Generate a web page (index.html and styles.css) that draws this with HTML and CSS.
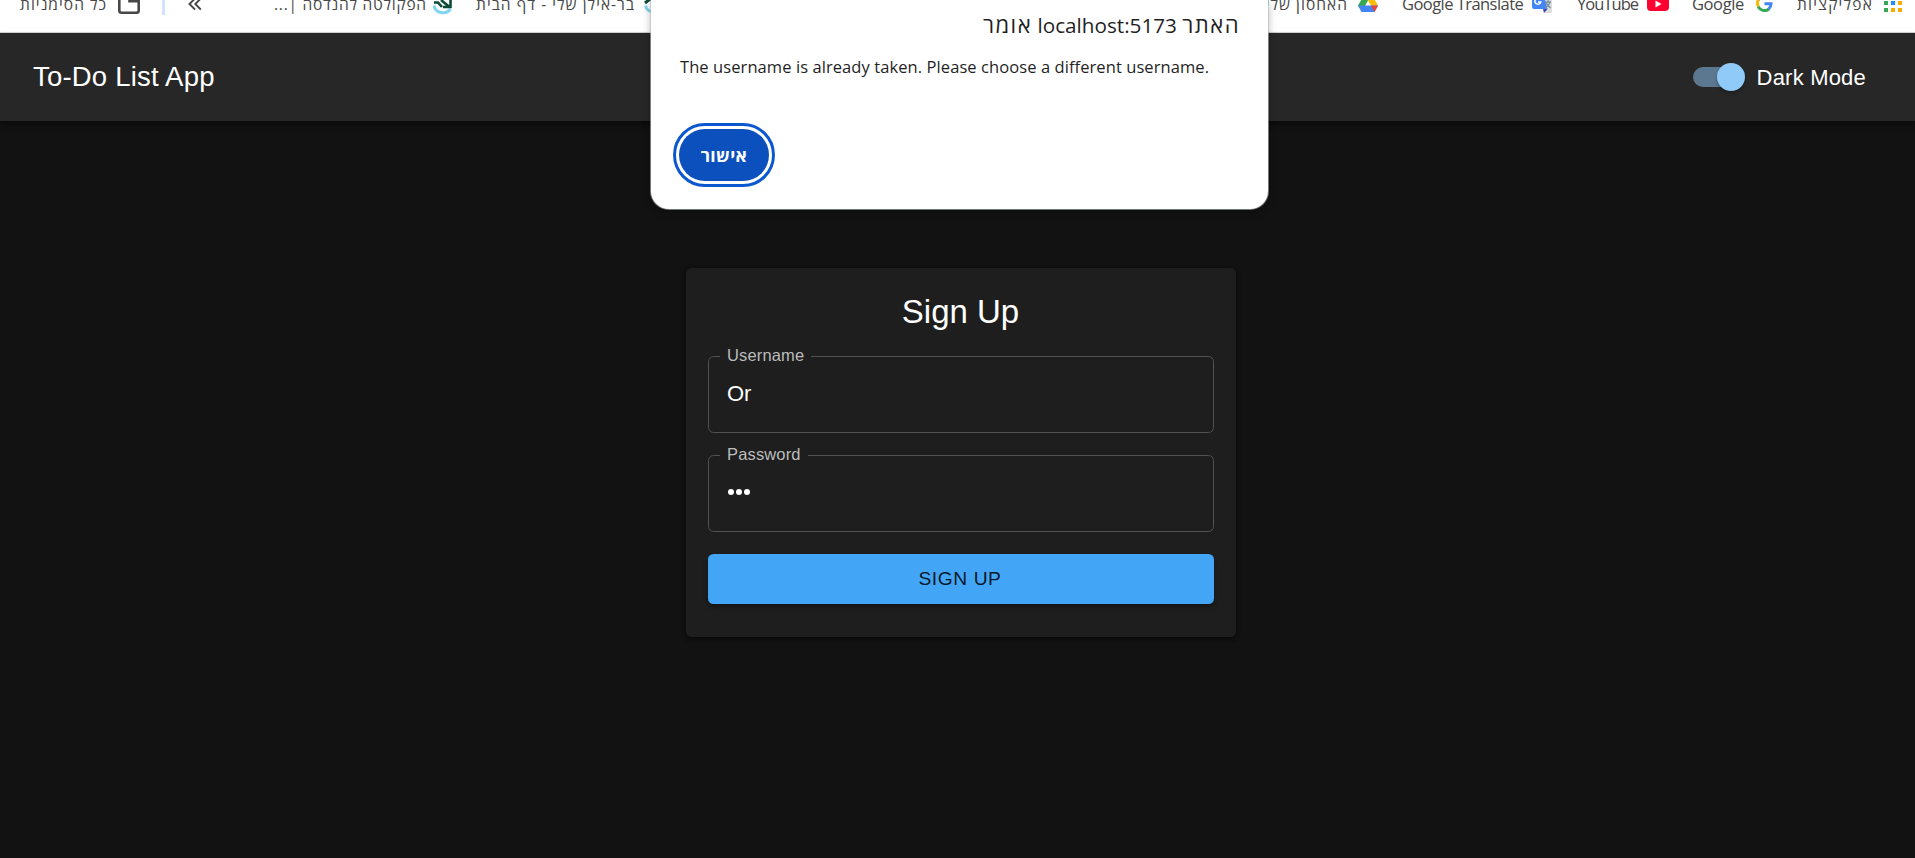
FILE: index.html
```
<!DOCTYPE html>
<html lang="en">
<head>
<meta charset="utf-8">
<title>To-Do List App</title>
<link rel="stylesheet" href="styles.css">
</head>
<body>
<div class="bookmarks">
  <div class="bm all"><span class="lbl he" dir="rtl">כל הסימניות</span>
    <svg width="24" height="24" viewBox="0 0 24 24" fill="none" stroke="#474747" stroke-width="2.6"><path d="M2.3 3V19.5Q2.3 21.7 4.500 21.7H19.5Q21.7 21.7 21.7 19.5V10.300H12.500V8"/></svg></div>
  <span class="divider"></span>
  <svg class="chev" width="14" height="14" viewBox="0 0 14 14" fill="none" stroke="#474747" stroke-width="1.9"><path d="M7 1.5 1.5 7 7 12.5M12.8 1.5 7.3 7 12.8 12.5"/></svg>
  <div class="bm eng"><span class="lbl he" dir="rtl">הפקולטה להנדסה |...</span>
    <svg width="20" height="24" viewBox="0 0 20 24" fill="none"><path d="M1 14.5A9 8 0 0 0 17.500 18" stroke="#7fd6ee" stroke-width="3"/><path d="M1 11.500H5L9 16M8 9 16.500 16M17.500 9V16H10" stroke="#0b4a35" stroke-width="2.600"/></svg></div>
  <div class="bm home"><span class="lbl he" dir="rtl">בר-אילן שלי - דף הבית</span>
    <svg width="20" height="24" viewBox="0 0 20 24" fill="none"><path d="M1.500 14.500A9 8 0 0 0 17.500 18" stroke="#7fd6ee" stroke-width="3"/><path d="M1 12 6 8 17 16" stroke="#0b4a35" stroke-width="3"/></svg></div>
  <div class="bm drive"><span class="lbl he" dir="rtl">האחסון שלי</span>
    <svg width="20" height="24" viewBox="0 0 20 24"><path d="M6.500 3.500 10 9.500 4 20.500 0 14.500Z" fill="#34a853"/><path d="M6.500 3.500H13.500L20 14.500H13Z" fill="#fbbc04"/><path d="M6.500 14.500H20L16.500 21H3.500L0 14.500Z" fill="#4285f4"/><path d="M13 14.500H20L16.500 21Z" fill="#ea4335"/></svg></div>
  <div class="bm trans"><span class="lbl">Google Translate</span>
    <svg width="21" height="24" viewBox="0 0 21 24"><path d="M10 7H20V22H13Z" fill="#dcdcdc"/><path d="M0 2H11L15.500 18H2Q0 18 0 16Z" fill="#4285f4"/><path d="M11 18H15.500L12 22Z" fill="#3949ab"/><path d="M13 11H19M16 9V11M18 11Q17 15 13.500 17M14 12 18.500 17" stroke="#7890a0" stroke-width="1.300" fill="none"/><path d="M8 8A3 3 0 1 0 8.800 11H6" stroke="#fff" stroke-width="1.500" fill="none"/></svg></div>
  <div class="bm yt"><span class="lbl">YouTube</span>
    <svg width="22" height="24" viewBox="0 0 22 24"><rect y="4" width="22" height="16" rx="4" fill="#ff0033"/><path d="M8.500 9.500V16.500L14.500 13Z" fill="#fff"/></svg></div>
  <div class="bm goog"><span class="lbl">Google</span>
    <svg width="17" height="24" viewBox="0 0 17 24" fill="none" stroke-width="3"><path d="M2.300 15.500A7 7 0 0 1 2.300 9" stroke="#fbbc05"/><path d="M2.300 9A7 7 0 0 1 13.500 7.500" stroke="#ea4335"/><path d="M2.200 15.500A7 7 0 0 0 13 18" stroke="#34a853"/><path d="M8.500 12.700H15Q15 16 12.600 18.200" stroke="#4285f4"/></svg></div>
  <div class="bm apps"><span class="lbl he" dir="rtl">אפליקציות</span>
    <svg width="18" height="24" viewBox="0 0 18 24"><path d="M0 3H4V7H0ZM7 3H11V7H7ZM14 3H18V7H14Z" fill="#ea4335"/><path d="M0 10H4V14H0ZM0 17H4V21H0Z" fill="#34a853"/><path d="M7 10H11V14H7Z" fill="#1a8cff"/><path d="M14 10H18V14H14ZM7 17H11V21H7ZM14 17H18V21H14Z" fill="#f9ab00"/></svg></div>
</div>
<header class="appbar">
  <h1 class="brand">To-Do List App</h1>
  <div class="toggle"><span class="track"><span class="thumb"></span></span><span class="mode">Dark Mode</span></div>
</header>
<main class="main">
  <form class="card">
    <h2 class="heading">Sign Up</h2>
    <fieldset class="field"><legend>Username</legend><span class="value">Or</span></fieldset>
    <fieldset class="field last"><legend>Password</legend><span class="dots"><i></i><i></i><i></i></span></fieldset>
    <button class="submit" type="button">SIGN UP</button>
  </form>
</main>
<div class="dialog">
  <div class="dtitle" dir="rtl"><span class="word">האתר</span> <span class="host">localhost:5173</span> <span class="word">אומר</span></div>
  <p class="dmsg">The username is already taken. Please choose a different username.</p>
  <button class="ok" type="button">אישור</button>
</div>
</body>
</html>
```
FILE: styles.css
```
* { box-sizing: border-box; }
body { margin: 0; height: 858px; overflow: hidden; background: #121212; color: #fff; font-family: "Liberation Sans", Arial, sans-serif; display: flex; flex-direction: column; }
.bookmarks { height: 33px; flex: none; background: #fff; border-bottom: 1px solid #d4d4d4; display: flex; align-items: flex-start; padding-left: 20px; overflow: hidden; color: #474747; font: 16.5px/24px "Open Sans", "Noto Sans", sans-serif; }
.bm { flex: none; display: flex; justify-content: space-between; margin-top: -8px; height: 24px; }
.bm svg { flex: none; margin-top: -1px; }
.lbl { white-space: nowrap; letter-spacing: -.55px; }
.he { font-size: 15.5px; line-height: 25px; letter-spacing: 1.05px; }
.all { width: 121px; }
.divider { flex: none; width: 3px; height: 15px; margin-left: 21px; background: #d3e3fd; }
.chev { flex: none; margin: -3px 0 0 23px; }
.eng { width: 179px; margin-left: 72px; }
.eng .lbl { letter-spacing: .75px; }
.home { width: 188px; margin-left: 23px; }
.drive { width: 118px; margin-left: 596px; justify-content: flex-end; gap: 10px; }
.trans { width: 151px; margin-left: 24px; }
.yt { width: 92px; margin-left: 24px; }
.yt .lbl { letter-spacing: -.95px; }
.goog { width: 81px; margin-left: 23px; }
.goog .lbl { letter-spacing: -.4px; }
.apps { width: 105px; margin-left: 24px; }
.apps .lbl { letter-spacing: 1.25px; }

.appbar { height: 88px; flex: none; display: flex; align-items: center; justify-content: space-between; padding: 0 49px 0 33px; background: #272727; box-shadow: 0 3px 5px rgba(0,0,0,.3), 0 5px 7px rgba(0,0,0,.15); }
.brand { margin: 0; font-size: 27.5px; line-height: 44px; font-weight: 400; letter-spacing: .2px; }
.toggle { display: flex; align-items: center; gap: 17px; }
.track { display: flex; align-items: center; justify-content: flex-end; width: 47px; height: 20px; border-radius: 10px; background: #5b7890; }
.thumb { flex: none; width: 28px; height: 28px; margin-right: -5px; border-radius: 50%; background: #90caf9; box-shadow: 0 2px 3px rgba(0,0,0,.3); }
.mode { font-size: 22px; line-height: 33px; letter-spacing: .2px; }

.main { display: flex; justify-content: center; padding: 147px 0 0 7px; }
.card { width: 550px; height: 369px; padding: 22px; border-radius: 5.5px; background: #1e1e1e; box-shadow: 0 2px 4px rgba(0,0,0,.35), 0 1px 5px rgba(0,0,0,.25); display: flex; flex-direction: column; }
.heading { margin: 0 0 15px; padding-right: 1px; font-size: 33px; line-height: 44px; font-weight: 400; text-align: center; }
.field { margin: 0 0 15px; height: 84px; padding: 0 17px 0 11px; border: 1px solid #515151; border-radius: 5.5px; min-width: 0; }
.last { margin-bottom: 22px; }
.field legend { padding: 0 7px; height: 15px; font-size: 16.5px; line-height: 13px; letter-spacing: .15px; color: #bcbcbc; }
.field .value { display: block; margin: 17px 0 0 7px; font-size: 22px; line-height: 26px; }
.dots { display: flex; gap: 2px; margin: 26px 0 0 7.5px; }
.dots i { width: 6px; height: 6px; border-radius: 50%; background: #fff; }
.submit { height: 50px; flex: none; border: 0; padding: 0 2px 1px 0; border-radius: 5.5px; background: #42a5f5; color: rgba(0,0,0,.87); font: 19.25px/32px "Liberation Sans", Arial, sans-serif; letter-spacing: .55px; box-shadow: 0 3px 5px rgba(0,0,0,.35); }

.dialog { position: absolute; left: 651px; top: 0; width: 617px; height: 209px; padding: 7px 28px 0 28px; border-radius: 0 0 18px 18px; background: #fff; color: #1f1f1f; box-shadow: 0 0 0 1px rgba(180,190,190,.6), 0 3px 9px rgba(0,0,0,.3); font-family: "Open Sans", "Noto Sans", sans-serif; }
.dtitle { height: 36px; font-size: 20.7px; line-height: 34px; font-weight: 500; white-space: nowrap; }
.word { font-size: 22px; letter-spacing: 1.5px; }
.dmsg { margin: 9px 0 48px; padding-left: 1px; font-size: 16.5px; line-height: 29px; height: 29px; letter-spacing: .08px; white-space: nowrap; }
.ok { display: block; width: 90px; height: 52px; border: 0; border-radius: 26px; background: #0b50bc; color: #fff; padding: 0; font: 700 17.5px/30px "Open Sans", "Noto Sans", sans-serif; letter-spacing: .4px; outline: 3px solid #0b57d0; outline-offset: 3px; }
```
